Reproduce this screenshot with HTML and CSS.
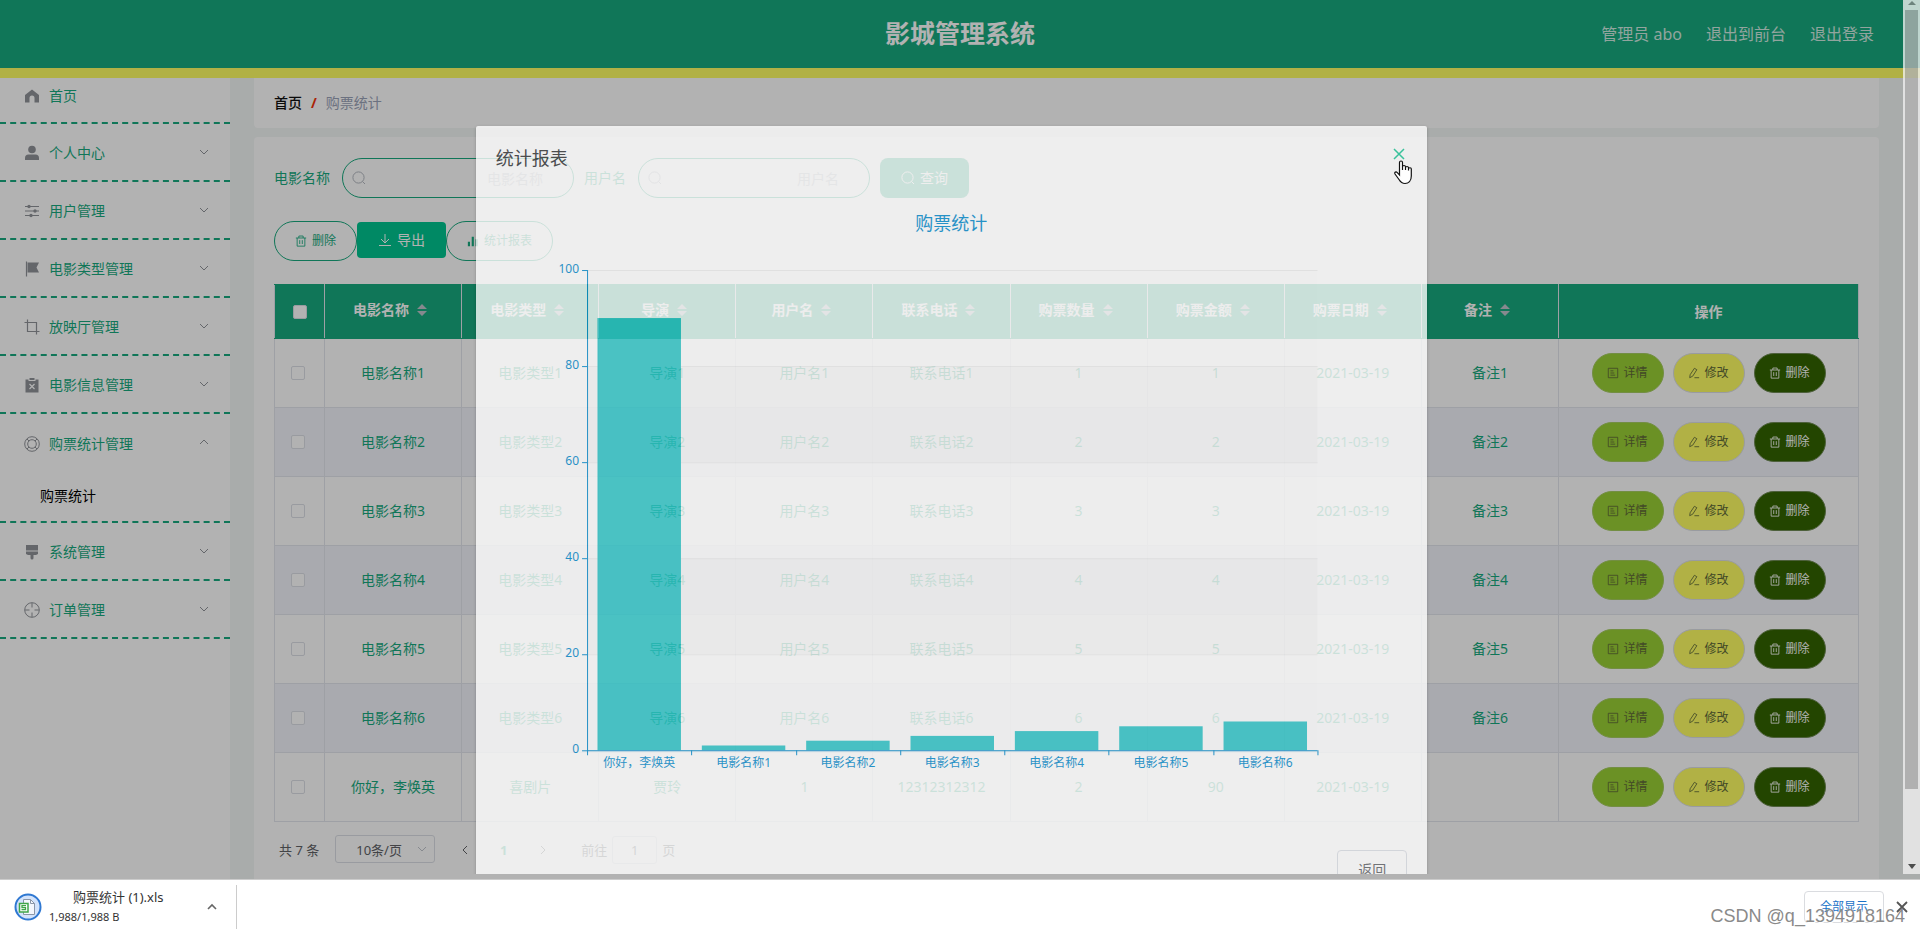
FILE: index.html
```html
<!DOCTYPE html>
<html lang="zh-CN">
<head>
<meta charset="utf-8">
<title>影城管理系统</title>
<link rel="stylesheet" href="styles.css">
</head>
<body>
<svg class="sprite" aria-hidden="true">
  <symbol id="i-down" viewBox="0 0 12 12"><path d="M2 4l4 4 4-4" fill="none" stroke="currentColor"/></symbol>
  <symbol id="i-up" viewBox="0 0 12 12"><path d="M2 8l4-4 4 4" fill="none" stroke="currentColor"/></symbol>
  <symbol id="i-home" viewBox="0 0 16 16"><path d="M8 1.500L1 7v7.500h4.500v-4.500a2.500 2.500 0 0 1 5 0v4.500h4.500V7z" fill="currentColor"/></symbol>
  <symbol id="i-user" viewBox="0 0 16 16"><circle cx="8" cy="4.500" r="3.800" fill="currentColor"/><path d="M1 15v-2a3.500 3.500 0 0 1 3.500-3.500h7A3.500 3.500 0 0 1 15 13v2z" fill="currentColor"/></symbol>
  <symbol id="i-sliders" viewBox="0 0 16 16"><path d="M1 3.500h14M1 8h14M1 12.500h14" stroke="currentColor" fill="none"/><circle cx="5" cy="3.500" r="1.700" fill="currentColor"/><circle cx="11" cy="8" r="1.700" fill="currentColor"/><circle cx="7" cy="12.500" r="1.700" fill="currentColor"/></symbol>
  <symbol id="i-flag" viewBox="0 0 16 16"><path d="M2.500 0.500v15" stroke="currentColor" stroke-width="1.200"/><path d="M3.500 1.500h11.500l-2.500 5 2.500 5H3.500z" fill="currentColor"/></symbol>
  <symbol id="i-crop" viewBox="0 0 16 16"><path d="M0.500 3.500h12v12M3.500 0.500v12h12" fill="none" stroke="currentColor" stroke-width="1.200"/></symbol>
  <symbol id="i-failed" viewBox="0 0 16 16"><path fill-rule="evenodd" d="M1.500 2.500h3V4h7V2.500h3v13h-13zM5.500 1h5v2h-5z" fill="currentColor"/><path d="M5.500 7l5 5m0-5l-5 5" stroke="#fff" stroke-width="1.200"/></symbol>
  <symbol id="i-help" viewBox="0 0 16 16"><g fill="none" stroke="currentColor"><circle cx="8" cy="8" r="7.300"/><circle cx="8" cy="8" r="4.300"/><path d="M3 3l2 2M13 3l-2 2M3 13l2-2M13 13l-2-2"/></g></symbol>
  <symbol id="i-brush" viewBox="0 0 16 16"><path d="M2 1h12v5.500H2zM2 7.500h12v2.500l-2 1H9.500V14a1.500 1.500 0 0 1-3 0v-3H4l-2-1z" fill="currentColor"/></symbol>
  <symbol id="i-aim" viewBox="0 0 16 16"><g fill="none" stroke="currentColor"><circle cx="8" cy="8" r="7.300"/><path d="M8 1v4.500M8 10.500V15M1 8h4.500M10.500 8H15"/></g></symbol>
  <symbol id="i-search" viewBox="0 0 14 14"><path d="M10.500 10.500L13 13" stroke="currentColor"/><circle cx="6.500" cy="6.500" r="5.600" fill="none" stroke="currentColor"/></symbol>
  <symbol id="i-trash" viewBox="0 0 14 14"><path d="M1 3.500h12M4.500 3.500V1.200h5v2.300M2.500 3.500v9.500h9V3.500M5.500 6v4.500M8.500 6v4.500" fill="none" stroke="currentColor"/></symbol>
  <symbol id="i-download" viewBox="0 0 14 14"><path d="M7 1v9M3 6l4 4 4-4M1 12.500h12" fill="none" stroke="currentColor"/></symbol>
  <symbol id="i-chart" viewBox="0 0 14 14"><path d="M1 8h2.500v5H1zM5.500 2H8v11H5.500zM10 5h2.500v8H10z" fill="currentColor"/></symbol>
  <symbol id="i-doc" viewBox="0 0 14 14"><path d="M1.500 1.500h11v11h-11zM4 4.500h3.500M4 7h4.500M4 9.500h5.500" fill="none" stroke="currentColor"/></symbol>
  <symbol id="i-edit" viewBox="0 0 14 14"><path d="M2 12.500l.5-3.500L7.500 1.500l2.800 1.700L5.500 10.700zM7.500 12.500H13" fill="none" stroke="currentColor"/></symbol>
  <symbol id="i-sort" viewBox="0 0 10 12"><path d="M0 5l5-5 5 5zM0 7h10l-5 5z" fill="currentColor"/></symbol>
</svg>

<div class="viewport">
  <header class="topbar">
    <h1 class="topbar-title">影城管理系统</h1>
    <nav class="topbar-links">
      <span>管理员 abo</span><a href="#front">退出到前台</a><a href="#logout">退出登录</a>
    </nav>
  </header>

  <div class="page">
    <nav class="sidebar">
      <a class="menu-item" href="#home"><svg class="menu-icon"><use href="#i-home"/></svg><span>首页</span></a>
      <a class="menu-item" href="#me"><svg class="menu-icon"><use href="#i-user"/></svg><span>个人中心</span><svg class="menu-arrow"><use href="#i-down"/></svg></a>
      <a class="menu-item" href="#users"><svg class="menu-icon"><use href="#i-sliders"/></svg><span>用户管理</span><svg class="menu-arrow"><use href="#i-down"/></svg></a>
      <a class="menu-item" href="#types"><svg class="menu-icon"><use href="#i-flag"/></svg><span>电影类型管理</span><svg class="menu-arrow"><use href="#i-down"/></svg></a>
      <a class="menu-item" href="#halls"><svg class="menu-icon"><use href="#i-crop"/></svg><span>放映厅管理</span><svg class="menu-arrow"><use href="#i-down"/></svg></a>
      <a class="menu-item" href="#films"><svg class="menu-icon"><use href="#i-failed"/></svg><span>电影信息管理</span><svg class="menu-arrow"><use href="#i-down"/></svg></a>
      <a class="menu-item menu-open" href="#tickets"><svg class="menu-icon"><use href="#i-help"/></svg><span>购票统计管理</span><svg class="menu-arrow"><use href="#i-up"/></svg></a>
      <a class="menu-sub" href="#stats">购票统计</a>
      <a class="menu-item" href="#system"><svg class="menu-icon"><use href="#i-brush"/></svg><span>系统管理</span><svg class="menu-arrow"><use href="#i-down"/></svg></a>
      <a class="menu-item" href="#orders"><svg class="menu-icon"><use href="#i-aim"/></svg><span>订单管理</span><svg class="menu-arrow"><use href="#i-down"/></svg></a>
    </nav>

    <main class="main">
      <nav class="breadcrumb"><a href="#home">首页</a><b>/</b><span>购票统计</span></nav>
      <section class="card">
        <form class="search">
          <label for="film">电影名称</label>
          <div class="field"><svg><use href="#i-search"/></svg><input id="film" type="text" placeholder="电影名称"></div>
          <label for="user">用户名</label>
          <div class="field"><svg><use href="#i-search"/></svg><input id="user" type="text" placeholder="用户名"></div>
          <button class="query" type="button"><svg><use href="#i-search"/></svg>查询</button>
        </form>
        <div class="actions">
          <button class="pill" type="button"><svg><use href="#i-trash"/></svg>删除</button>
          <button class="export" type="button"><svg><use href="#i-download"/></svg>导出</button>
          <button class="pill" type="button"><svg><use href="#i-chart"/></svg>统计报表</button>
        </div>
        <table class="grid">
          <colgroup><col class="col-check"><col span="9"><col class="col-ops"></colgroup>
          <thead><tr id="head"></tr></thead>
          <tbody id="rows"></tbody>
        </table>
        <div class="pager">
          <span>共 7 条</span>
          <div class="size"><select aria-label="每页条数"><option>10条/页</option></select><svg><use href="#i-down"/></svg></div>
          <button type="button" aria-label="上一页"><svg class="turn-left"><use href="#i-down"/></svg></button>
          <button type="button" class="current">1</button>
          <button type="button" aria-label="下一页"><svg class="turn-right"><use href="#i-down"/></svg></button>
          <label class="jump">前往<input type="text" value="1">页</label>
        </div>
      </section>
    </main>
  </div>

  <div class="mask"></div>
  <div class="overlay">
    <div class="overlay-body">
      <section class="dialog" role="dialog" aria-label="统计报表">
        <header class="dialog-head"><h2>统计报表</h2>
          <button class="close" type="button" aria-label="关闭"><svg viewBox="0 0 12 12"><path d="M1 1l10 10M11 1L1 11" stroke="currentColor" stroke-width="1.500"/></svg></button>
        </header>
        <div class="dialog-body"><svg class="chart" id="chart" viewBox="0 0 911 600"></svg></div>
        <footer class="dialog-foot"><button type="button">返回</button></footer>
      </section>
    </div>
    <div class="scrollbar"><i class="arrow-up"></i><i class="thumb"></i><i class="arrow-down"></i></div>
  </div>
  <svg class="cursor" viewBox="0 0 18 25"><path d="M5.500 15V2.500a1.500 1.500 0 0 1 3 0V10V7a1.400 1.400 0 0 1 3 0v3V8a1.400 1.400 0 0 1 3 0v2.500V9a1.400 1.400 0 0 1 2.800.3V16c0 5-2.800 7.500-6.300 7.500-3 0-4.500-1.500-6-4L1 14c-.8-1.800 1-2.700 2.300-1.400z" fill="#fff" stroke="#111" stroke-width="1.200"/></svg>
</div>

<footer class="downloads">
  <svg class="file" viewBox="0 0 28 28"><circle cx="14" cy="14" r="12.500" fill="#d3e3fb" stroke="#2f78d2" stroke-width="2"/><path d="M9.500 6.500h7l4 4v11h-11z" fill="#f4f7fd" stroke="#8a96a8"/><path d="M16.500 6.500v4h4" fill="none" stroke="#8a96a8"/><path d="M5.500 10.500h8.500v8.500H5.500z" fill="#fff" stroke="#3fa648" stroke-width="1.500"/><path d="M12 12.700H8v2h3.500v2H7.500" fill="none" stroke="#3fa648" stroke-width="1.300"/></svg>
  <div class="file-text"><span class="file-name">购票统计 (1).xls</span><span class="file-size">1,988/1,988 B</span></div>
  <button class="more" type="button" aria-label="更多"><svg viewBox="0 0 12 12"><path d="M2 8l4-4 4 4" fill="none" stroke="currentColor" stroke-width="1.600"/></svg></button>
  <button class="show-all" type="button">全部显示</button>
  <button class="bar-close" type="button" aria-label="关闭"><svg viewBox="0 0 12 12"><path d="M1 1l10 10M11 1L1 11" stroke="currentColor" stroke-width="1.800"/></svg></button>
  <span class="watermark">CSDN @q_1394918164</span>
</footer>
<script src="app.js"></script>
</body>
</html>
```
FILE: styles.css
```css
* { box-sizing: border-box; }
body {
  margin: 0;
  height: 100vh;
  display: flex;
  flex-direction: column;
  overflow: hidden;
  font: 14px/20px "Noto Sans", "Noto Sans CJK SC", sans-serif;
  color: #18aa7e;
  background: #fff;
}
a { color: inherit; text-decoration: none; }
button, input, select { font: inherit; color: inherit; }
button { padding: 0; border: 0; background: none; display: inline-flex; align-items: center; justify-content: center; }
svg { flex: none; }
.sprite { position: absolute; width: 0; height: 0; }

.viewport {
  flex: 1;
  min-height: 0;
  position: relative;
  overflow: hidden;
  display: flex;
  flex-direction: column;
  background: #f2f6f5;
}

.topbar {
  position: relative;
  z-index: 1;
  flex: none;
  display: grid;
  grid-template-columns: 1fr auto 1fr;
  align-items: center;
  height: 78px;
  padding: 0 46px;
  background: #18aa7e;
  border-bottom: 10px solid #fefe64;
}
.topbar-title { grid-column: 2; margin: 0; padding-bottom: 2px; font-size: 25px; line-height: 36px; color: #fff; }
.topbar-links { justify-self: end; display: flex; gap: 24px; padding-bottom: 1px; font-size: 16px; color: #d2ebe2; }

.page { flex: 1; min-height: 0; display: flex; padding-right: 41px; gap: 24px; }
.sidebar { width: 230px; flex: none; margin-top: -12px; background: #fff; }
.menu-item {
  display: flex;
  align-items: center;
  height: 58px;
  padding: 2px 20px 0 24px;
  border-bottom: 2px dashed #18aa7e;
}
.menu-item:first-child { padding-top: 4px; }
.menu-open { border-bottom: 0; height: 57px; }
.menu-icon { width: 16px; height: 16px; margin-right: 9px; color: #909399; }
.menu-arrow { width: 12px; height: 12px; margin: 0 0 3px auto; color: #909399; }
.menu-sub { display: block; padding: 15px 40px; border-bottom: 2px dashed #18aa7e; color: #000; }

.main { flex: 1; min-width: 0; display: flex; flex-direction: column; gap: 9px; }
.breadcrumb { display: flex; gap: 9px; padding: 15px 20px; background: #fff; border-radius: 0 0 4px 4px; color: #9aa3b8; }
.breadcrumb a { color: #111; font-weight: 500; }
.breadcrumb b { color: #f5320a; }
.card { flex: 1; padding: 21px 20px 0; background: #fff; border-radius: 4px 4px 0 0; }

.search { display: flex; align-items: center; gap: 10px; }
.field { position: relative; }
.field svg { position: absolute; left: 10px; top: 13px; width: 14px; height: 14px; color: #b4b8c0; }
.field input {
  width: 232px;
  height: 40px;
  padding: 0 30px;
  border: 1px solid #18aa7e;
  border-radius: 20px;
  background: #fff;
  text-align: right;
}
.search label + .field { margin-left: 2px; }
.field input::placeholder { color: #c0c4cc; }
.query { width: 89px; height: 40px; gap: 5px; border-radius: 8px; background: #18aa7e; color: #fff; }
.query svg { width: 14px; height: 14px; }

.actions { display: flex; align-items: flex-start; margin: 23px 0; }
.pill { height: 40px; padding: 0 20px; gap: 5px; border: 1px solid #18aa7e; border-radius: 20px; background: #fff; font-size: 12px; }
.pill svg, .op svg { width: 12px; height: 12px; }
.export { width: 89px; height: 36px; margin-top: 1px; gap: 5px; border-radius: 4px; background: #00c590; color: #fff; }
.export svg { width: 14px; height: 14px; }

.grid { width: 100%; table-layout: fixed; border-collapse: collapse; text-align: center; }
.col-check { width: 50px; }
.col-ops { width: 300px; }
.grid th, .grid td { padding: 0; border: 1px solid #e2e5ec; }
.grid th { height: 54px; background: #18aa7e; color: #fff; border-top-color: #18aa7e; border-bottom-color: #18aa7e; }
.grid td { height: 69px; }
.grid tbody tr:nth-child(even) { background: #f2f4fb; }
.grid th.sortable { padding: 0 6px 3px 0; }
.grid th svg { width: 10px; height: 12px; margin-left: 8px; vertical-align: -1px; color: #c0c4cc; }
.grid input { appearance: none; display: block; width: 14px; height: 14px; margin: 0 auto; border: 1px solid #dcdfe6; border-radius: 2px; background: #fff; }
.grid td input { position: relative; right: 2px; }
.ops { display: flex; justify-content: center; gap: 9px; }
.op { width: 72px; height: 40px; gap: 4px; border: 1px solid #dcdfe6; border-radius: 20px; font-size: 12px; color: #606a38; }
.op-view { background: #9ad035; border-color: #a5cc60; }
.op-edit { background: #fefe64; }
.op-del { background: #336400; border-color: #6f8a55; color: #fff; }

.pager { display: flex; align-items: center; padding: 13px 5px; font-size: 13px; line-height: 28px; color: #606266; }
.size { position: relative; margin: 0 10px 0 16px; }
.size select { appearance: none; width: 100px; height: 28px; padding: 0 20px; border: 1px solid #dcdfe6; border-radius: 3px; background: #fff; }
.size svg { position: absolute; right: 7px; top: 8px; width: 12px; height: 12px; color: #c0c4cc; }
.pager button { width: 39px; font-weight: 700; }
.pager button svg { width: 12px; height: 12px; }
.turn-left { transform: rotate(90deg); }
.turn-right { transform: rotate(-90deg); }
.pager .current { color: #18aa7e; }
.jump { display: flex; margin-left: 19px; gap: 5px; color: #606266; }
.jump input { width: 45px; height: 28px; border: 1px solid #dcdfe6; border-radius: 3px; text-align: center; }

.mask { position: absolute; inset: 0; z-index: 2; background: rgba(0, 0, 0, .3); }
.overlay { position: absolute; inset: 0 0 5px; z-index: 3; display: flex; overflow: hidden; opacity: .78; }
.overlay-body { flex: 1; min-width: 0; }
.dialog { width: 50%; margin: 126px auto 0; background: #fff; border-radius: 2px; box-shadow: 0 1px 3px rgba(0, 0, 0, .3); }
.dialog-head { display: flex; justify-content: space-between; padding: 20px 20px 10px; color: #303133; }
.dialog-head h2 { margin: 0; font-size: 18px; line-height: 24px; font-weight: 400; }
.close { width: 16px; height: 16px; color: #18c795; }
.close svg { width: 12px; height: 12px; }
.dialog-body { padding: 30px 20px; }
.chart { display: block; width: 100%; }
.chart text { fill: #008acd; font-size: 12px; }
.chart .chart-title { font-size: 18px; }
.dialog-foot { display: flex; justify-content: flex-end; padding: 10px 20px 20px; }
.dialog-foot button { width: 70px; height: 40px; border: 1px solid #dcdfe6; border-radius: 4px; color: #606266; }

.scrollbar { width: 17px; flex: none; display: flex; flex-direction: column; align-items: center; background: #f1f1f1; }
.thumb { width: 13px; flex: 1; margin: 5px 0 75px; background: #b2b2b2; }
.arrow-up, .arrow-down { border: 4px solid transparent; }
.arrow-up { border-top: 0; border-bottom-color: #888; margin-top: 1px; }
.arrow-down { border-bottom: 0; border-top: 5px solid #333; margin-bottom: 5px; }
.cursor { position: absolute; z-index: 4; left: 1394px; top: 160px; width: 18px; height: 25px; }

.downloads { position: relative; flex: none; display: flex; align-items: center; height: 55px; padding: 0 12px; border-top: 1px solid #ccc; background: #fff; color: #333; }
.file { width: 28px; height: 28px; margin: 0 7px 0 2px; }
.file-text { display: flex; flex-direction: column; width: 157px; }
.file-name { padding-left: 24px; font-size: 13px; line-height: 20px; }
.file-size { font-size: 11px; line-height: 20px; }
.more { width: 31px; height: 44px; justify-content: flex-start; padding-right: 0; border-right: 1px solid #ccc; color: #666; }
.more svg, .bar-close svg { width: 12px; height: 12px; }
.show-all { width: 80px; height: 32px; margin-left: auto; border: 1px solid #dadce0; border-radius: 4px; font-size: 12px; color: #1a73c8; }
.bar-close { margin: 0 0 0 12px; color: #555; }
.watermark { position: absolute; right: 15px; bottom: 7px; font: 18px/22px "Liberation Sans", Arial, sans-serif; color: #8a8a8a; text-shadow: 1px 1px 0 #fff; }
```
FILE: app.js
```js
const icon = (id) => `<svg><use href="#i-${id}"/></svg>`;
const columns = ['电影名称', '电影类型', '导演', '用户名', '联系电话', '购票数量', '购票金额', '购票日期', '备注'];

document.getElementById('head').innerHTML =
  '<th><input type="checkbox" aria-label="全选"></th>' +
  columns.map((name) => `<th class="sortable">${name}${icon('sort')}</th>`).join('') +
  '<th>操作</th>';

const records = [];
for (let n = 1; n <= 6; n++) {
  records.push(['电影名称' + n, '电影类型' + n, '导演' + n, '用户名' + n, '联系电话' + n, n, n, '2021-03-19', '备注' + n]);
}
records.push(['你好，李焕英', '喜剧片', '贾玲', '1', '12312312312', 2, 90, '2021-03-19', '']);

document.getElementById('rows').innerHTML = records.map((record) =>
  `<tr><td><input type="checkbox" aria-label="${record[0]}"></td>` +
  record.map((value) => `<td>${value}</td>`).join('') +
  `<td><div class="ops">
    <button type="button" class="op op-view">${icon('doc')}详情</button>
    <button type="button" class="op op-edit">${icon('edit')}修改</button>
    <button type="button" class="op op-del">${icon('trash')}删除</button>
  </div></td></tr>`).join('');

const plot = { left: 91, right: 821, top: 60, bottom: 540 };
const data = [['你好，李焕英', 90], ['电影名称1', 1], ['电影名称2', 2], ['电影名称3', 3], ['电影名称4', 4], ['电影名称5', 5], ['电影名称6', 6]];
const step = (plot.right - plot.left) / data.length;
const barWidth = step * 0.8;
const y = (value) => plot.bottom - value / 100 * (plot.bottom - plot.top);
let out = '<text class="chart-title" x="455" y="20" text-anchor="middle">购票统计</text>';
for (let v = 0; v < 100; v += 20) {
  const fill = v % 40 ? 'rgba(200,200,200,.1)' : 'rgba(250,250,250,.1)';
  out += `<rect x="${plot.left}" y="${y(v + 20)}" width="${plot.right - plot.left}" height="96" fill="${fill}"/>`;
}
for (let v = 0; v <= 100; v += 20) {
  out += `<path d="M${plot.left} ${y(v) + 0.5}H${plot.right}" stroke="#eee"/>`;
  out += `<path d="M${plot.left - 5} ${y(v) + 0.5}h5" stroke="#008acd"/>`;
  out += `<text x="${plot.left - 8}" y="${y(v) + 3}" text-anchor="end">${v}</text>`;
}
data.forEach(([name, value], i) => {
  const x = plot.left + step * i;
  out += `<rect x="${x + (step - barWidth) / 2}" y="${y(value)}" width="${barWidth}" height="${plot.bottom - y(value)}" fill="#2ec7c9"/>`;
  out += `<text x="${x + step / 2}" y="557" text-anchor="middle">${name}</text>`;
});
for (let i = 0; i <= data.length; i++) {
  out += `<path d="M${Math.round(plot.left + step * i) + 0.5} ${plot.bottom}v5" stroke="#008acd"/>`;
}
out += `<path d="M${plot.left + 0.5} ${plot.top}V${plot.bottom + 0.5}H${plot.right}" fill="none" stroke="#008acd"/>`;
document.getElementById('chart').innerHTML = out;
```
